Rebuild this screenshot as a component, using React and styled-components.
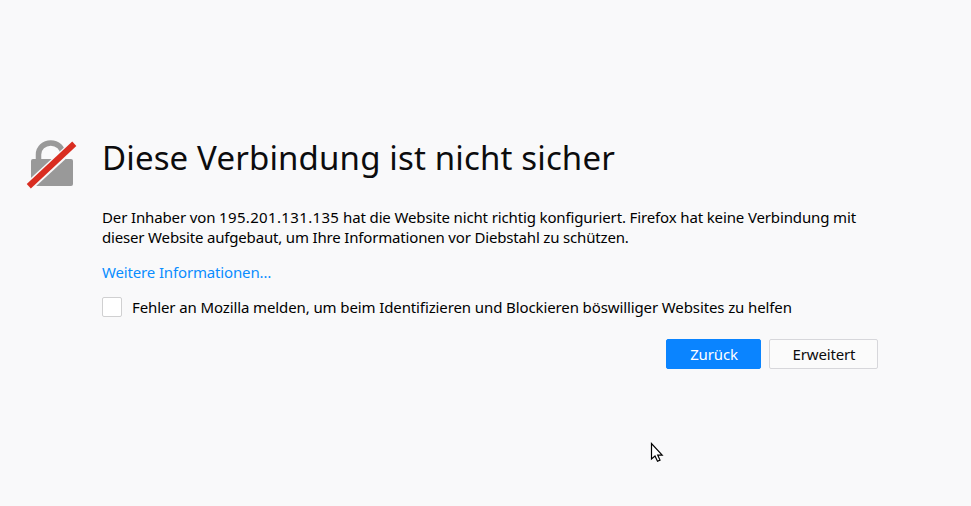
import React from "react";
import styled, { createGlobalStyle } from "styled-components";

const GlobalStyle = createGlobalStyle`
  body { margin: 0; background: #f9f9fa; color: #0c0c0d; font: 15px/20px "Noto Sans", sans-serif; }
  * { box-sizing: border-box; }
`;
const Page = styled.main`
  position: relative;
  height: 506px;
  overflow: hidden;
  padding: 138px 93px 0 26px;
  display: flex;
  align-items: flex-start;
`;
const Lock = styled.svg`
  width: 51px;
  height: 51px;
  flex: none;
  margin-right: 25px;
`;
const Content = styled.section`
  flex: 1;
  min-width: 0;
`;
const Title = styled.h1`
  margin: 0;
  font-size: 33px;
  font-weight: 400;
  line-height: 40px;
  letter-spacing: 0.15px;
  white-space: nowrap;
`;
const Description = styled.p`
  margin: 29px 0 0;
  color: #000;
`;
const Line = styled.span`
  display: block;
  white-space: nowrap;
  letter-spacing: ${(p) => p.$tracking}px;
`;
const Address = styled.span`
  letter-spacing: 0.35px;
`;
const MoreLink = styled.a`
  display: block;
  width: max-content;
  margin-top: 15px;
  letter-spacing: -0.15px;
  color: #0a8dff;
`;
const Report = styled.label`
  display: flex;
  align-items: center;
  gap: 10px;
  margin-top: 15px;
  letter-spacing: -0.11px;
  color: #000;
`;
const Checkbox = styled.input`
  appearance: none;
  width: 20px;
  height: 20px;
  margin: 0;
  border: 1px solid #d0d0d1;
  border-radius: 2px;
  background: #fff;
`;
const Actions = styled.div`
  display: flex;
  justify-content: flex-end;
  gap: 8px;
  margin-top: 22px;
`;
const Button = styled.button`
  width: ${(p) => p.$width}px;
  height: 30px;
  padding: 0 0 0 1px;
  font: inherit;
  letter-spacing: -0.15px;
  border-radius: 2px;
  border: 1px solid ${(p) => (p.$primary ? "#0a84ff" : "#d7d7db")};
  background: ${(p) => (p.$primary ? "#0a84ff" : "#fbfbfb")};
  color: ${(p) => (p.$primary ? "#fff" : "#0c0c0d")};
`;
const Pointer = styled.svg`
  position: absolute;
  left: 650px;
  top: 441px;
  width: 14px;
  height: 22px;
`;

export default function App() {
  return (
    <Page>
      <GlobalStyle />
      <Lock viewBox="26 138 51 51" aria-hidden="true">
        <path d="M38.500 162v-7.500a12.200 11.500 0 0 1 24.500 0v7" fill="none" stroke="#999" strokeWidth="5.500" />
        <rect x="31" y="159" width="42" height="27" rx="2" fill="#999" />
        <path d="M27 188L77 142" stroke="#f9f9fa" strokeWidth="9.500" />
        <path d="M28.800 186.300L74.300 143.700" stroke="#d92d21" strokeWidth="6" />
      </Lock>
      <Content>
        <Title>Diese Verbindung ist nicht sicher</Title>
        <Description>
          <Line $tracking={-0.135}>
            Der Inhaber von <Address>195.201.131.135</Address> hat die Website nicht richtig konfiguriert. Firefox hat keine Verbindung mit
          </Line>
          <Line $tracking={-0.17}>
            dieser Website aufgebaut, um Ihre Informationen vor Diebstahl zu schützen.
          </Line>
        </Description>
        <MoreLink>Weitere Informationen…</MoreLink>
        <Report>
          <Checkbox type="checkbox" />
          Fehler an Mozilla melden, um beim Identifizieren und Blockieren böswilliger Websites zu helfen
        </Report>
        <Actions>
          <Button $primary $width={95}>Zurück</Button>
          <Button $width={109}>Erweitert</Button>
        </Actions>
      </Content>
      <Pointer viewBox="0 0 14 22" aria-hidden="true">
        <path d="M1.500 2.500v15.500l3.500-3 2.500 5.300 2.500-1.200-2.300-5h4.500z" fill="#fff" stroke="#000" strokeWidth="1.200" />
      </Pointer>
    </Page>
  );
}
